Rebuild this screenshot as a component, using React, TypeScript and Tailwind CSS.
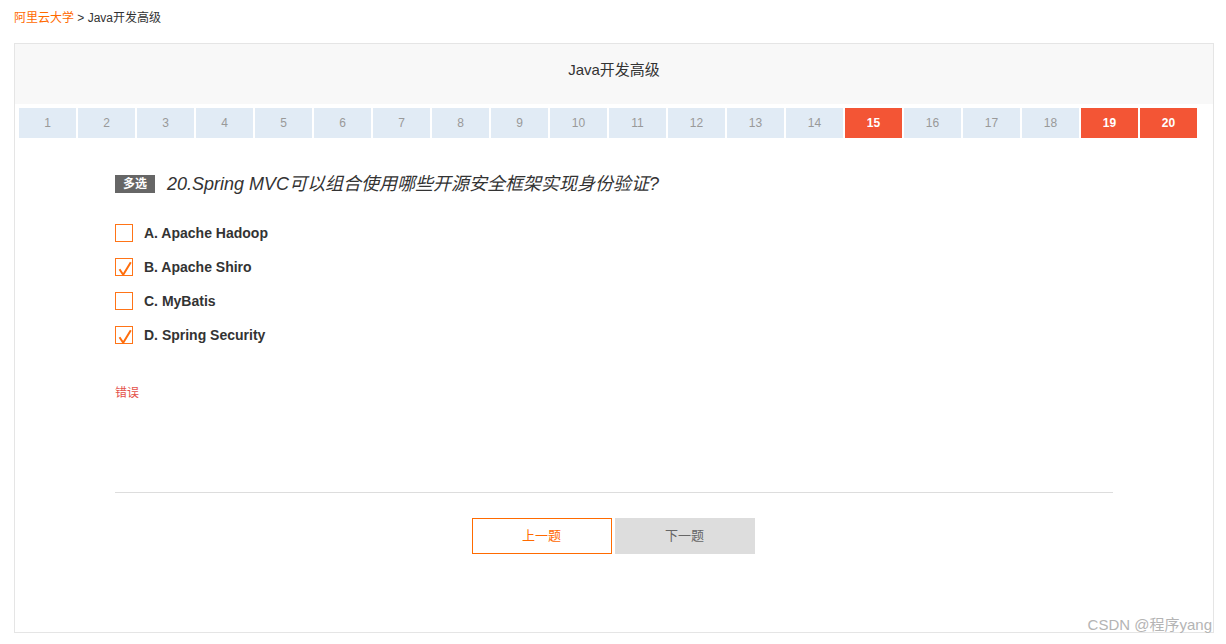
import React from "react";

const tabs = Array.from({ length: 20 }, (_, i) => i + 1);
const red = new Set([15, 19, 20]);

const options = [
  { label: "A. Apache Hadoop", checked: false },
  { label: "B. Apache Shiro", checked: true },
  { label: "C. MyBatis", checked: false },
  { label: "D. Spring Security", checked: true },
];

function Box({ checked }: { checked: boolean }) {
  return (
    <div className="relative w-[18px] h-[18px] border border-[#ff7417] bg-white shrink-0">
      {checked && (
        <svg className="absolute left-[1px] top-[1px]" width="16" height="17" viewBox="0 0 16 17">
          <path d="M2.5 9.2 L6.2 14.8 L13.8 2.2" fill="none" stroke="#ff6d0c" strokeWidth="2" strokeLinejoin="round" />
        </svg>
      )}
    </div>
  );
}

export default function App() {
  const font = { fontFamily: '"Liberation Sans", Arial, "Noto Sans CJK SC", sans-serif' };
  return (
    <div className="w-[1226px] h-[644px] bg-white relative" style={font}>
      <div className="pt-[10px] pl-[14px] text-[12px] leading-[16px] text-[#333] h-[43px]">
        <span className="text-[#ff6a00]">阿里云大学</span>
        <span> &gt; Java开发高级</span>
      </div>
      <div className="ml-[14px] w-[1200px] h-[590px] border border-[#e5e5e5] flex flex-col">
        <div className="h-[60px] bg-[#f8f8f8] flex items-center justify-center pb-[8px] text-[15px] text-[#333]">
          Java开发高级
        </div>
        <div className="flex gap-[2px] pl-[4px] mt-[4px]">
          {tabs.map((n) => (
            <div
              key={n}
              className={
                red.has(n)
                  ? "w-[57px] h-[30px] flex items-center justify-center text-[12px] font-bold text-white bg-[#f35535]"
                  : "w-[57px] h-[30px] flex items-center justify-center text-[12px] text-[#999] bg-[#e1ebf5]"
              }
            >
              {n}
            </div>
          ))}
        </div>
        <div className="px-[100px] pt-[37px]">
          <div className="flex items-center h-[18px]">
            <span className="bg-[#666] text-white text-[12px] font-bold h-[18px] w-[40px] flex items-center justify-center">
              多选
            </span>
            <span className="ml-[12px] text-[18px] italic text-[#333]">
              20.Spring MVC可以组合使用哪些开源安全框架实现身份验证?
            </span>
          </div>
          <div className="mt-[31px] flex flex-col gap-[16px]">
            {options.map((o) => (
              <div key={o.label} className="flex items-center h-[18px]">
                <Box checked={o.checked} />
                <span className="ml-[11px] text-[14px] font-bold text-[#333]">{o.label}</span>
              </div>
            ))}
          </div>
          <div className="mt-[41px] text-[12px] text-[#e4514a] leading-[16px]">错误</div>
          <div className="mt-[91px] border-t border-[#ddd]" />
          <div className="mt-[25px] flex justify-center gap-[3px] pr-[2px]">
            <button className="w-[140px] h-[36px] border border-[#ff6a00] text-[#ff6a00] text-[13px] bg-white">
              上一题
            </button>
            <button className="w-[140px] h-[36px] bg-[#dddddd] text-[#666] text-[13px]">下一题</button>
          </div>
        </div>
      </div>
      <div
        className="absolute right-[14px] top-[615px] text-[15px] text-[#b4b4b4] leading-[20px]"
        style={{ textShadow: "0 0 1px #fff" }}
      >
        CSDN @程序yang
      </div>
    </div>
  );
}
